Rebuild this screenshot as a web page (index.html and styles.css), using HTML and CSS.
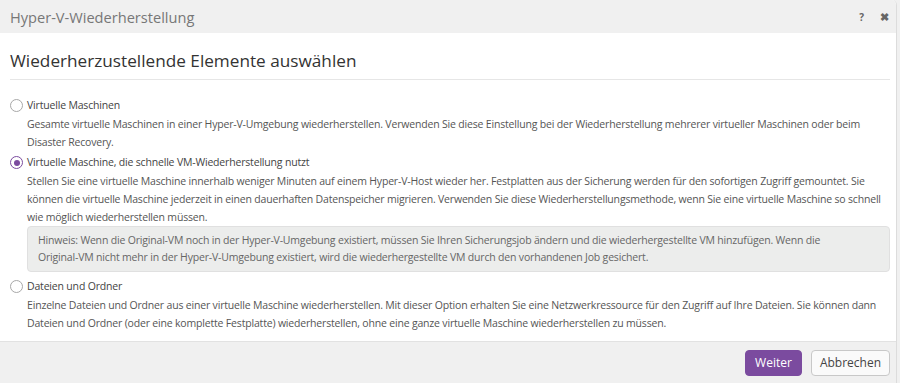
FILE: index.html
```html
<!DOCTYPE html>
<html lang="de">
<head>
    <meta charset="UTF-8">
    <title>Hyper-V-Wiederherstellung</title>
    <link rel="stylesheet" href="styles.css">
</head>
<body>
    <div class="dialog">
        <div class="dialog-header">
            <span class="dialog-title">Hyper-V-Wiederherstellung</span>
            <span class="header-tools">
                <span class="tool">?</span>
                <span class="tool close">&#x2716;</span>
            </span>
        </div>

        <div class="dialog-body">
            <h2>Wiederherzustellende Elemente auswählen</h2>

            <div class="option">
                <span class="radio"></span>
                <div class="option-text">
                    <div class="option-label">Virtuelle Maschinen</div>
                    <p>Gesamte virtuelle Maschinen in einer Hyper-V-Umgebung wiederherstellen. Verwenden Sie diese Einstellung bei der Wiederherstellung mehrerer virtueller Maschinen oder beim Disaster Recovery.</p>
                </div>
            </div>

            <div class="option">
                <span class="radio checked"></span>
                <div class="option-text">
                    <div class="option-label">Virtuelle Maschine, die schnelle VM-Wiederherstellung nutzt</div>
                    <p>Stellen Sie eine virtuelle Maschine innerhalb weniger Minuten auf einem Hyper-V-Host wieder her. Festplatten aus der Sicherung werden für den sofortigen Zugriff gemountet. Sie können die virtuelle Maschine jederzeit in einen dauerhaften Datenspeicher migrieren. Verwenden Sie diese Wiederherstellungsmethode, wenn Sie eine virtuelle Maschine so schnell wie möglich wiederherstellen müssen.</p>
                    <div class="note">Hinweis: Wenn die <span class="nowrap">Original-VM</span> noch in der Hyper-V-Umgebung existiert, müssen Sie Ihren Sicherungsjob ändern und die wiederhergestellte VM hinzufügen. Wenn die <span class="nowrap">Original-VM</span> nicht mehr in der Hyper-V-Umgebung existiert, wird die wiederhergestellte VM durch den vorhandenen Job gesichert.</div>
                </div>
            </div>

            <div class="option">
                <span class="radio"></span>
                <div class="option-text">
                    <div class="option-label">Dateien und Ordner</div>
                    <p>Einzelne Dateien und Ordner aus einer virtuelle Maschine wiederherstellen. Mit dieser Option erhalten Sie eine Netzwerkressource für den Zugriff auf Ihre Dateien. Sie können dann Dateien und Ordner (oder eine komplette Festplatte) wiederherstellen, ohne eine ganze virtuelle Maschine wiederherstellen zu müssen.</p>
                </div>
            </div>
        </div>

        <div class="dialog-footer">
            <button class="btn primary">Weiter</button>
            <button class="btn">Abbrechen</button>
        </div>
    </div>
</body>
</html>
```

FILE: styles.css
```css
html, body {
    margin: 0;
    padding: 0;
    background: #f0f0f0;
}
body {
    font-family: "Open Sans", Arial, sans-serif;
    color: #444;
    width: 900px;
    height: 383px;
    overflow: hidden;
}
.dialog {
    width: 896px;
    height: 383px;
    display: flex;
    flex-direction: column;
    border-right: 1px solid #dcdcdc;
    border-top-right-radius: 5px;
    background: #fff;
    overflow: hidden;
}
.dialog-header {
    height: 33px;
    flex: none;
    display: flex;
    align-items: center;
    justify-content: space-between;
    padding: 0 7px 0 10px;
    background: #f0f0f0;
}
.dialog-title {
    font-size: 14.6px;
    color: #777;
}
.header-tools {
    display: flex;
    align-items: center;
    gap: 16px;
}
.tool {
    font-size: 10px;
    font-weight: bold;
    color: #666;
}
.close {
    font-size: 10.5px;
}
.dialog-body {
    flex: 1;
    padding: 0 6px 0 10px;
}
h2 {
    margin: 16px 0 0;
    padding-bottom: 6px;
    font-size: 17.2px;
    line-height: 24px;
    font-weight: normal;
    color: #333;
    border-bottom: 1px solid #e6e6e6;
}
.option {
    display: flex;
    align-items: flex-start;
    margin-top: 2px;
    font-size: 10.5px;
    letter-spacing: -0.18px;
    line-height: 18px;
}
.option:first-of-type {
    margin-top: 16px;
}
.radio {
    flex: none;
    width: 11px;
    height: 11px;
    margin: 3px 4px 0 0;
    border: 1px solid #a8a8a8;
    border-radius: 50%;
    background: #fff;
    position: relative;
}
.radio.checked {
    border-color: #7b4b9f;
}
.radio.checked::after {
    content: "";
    position: absolute;
    left: 2.5px;
    top: 2.5px;
    width: 6px;
    height: 6px;
    border-radius: 50%;
    background: #7b4b9f;
}
.option-text {
    flex: 1;
}
.option-label {
    margin-bottom: 1px;
}
.option-text p {
    margin: 0;
    color: #555;
}
.note {
    margin: 0 0 3px;
    padding: 5px 20px 5px 10px;
    background: #ecedec;
    border: 1px solid #e0e0e0;
    border-radius: 4px;
    line-height: 17px;
    color: #666;
}
.nowrap {
    white-space: nowrap;
}
.dialog-footer {
    height: 41px;
    flex: none;
    display: flex;
    align-items: center;
    justify-content: flex-end;
    gap: 9px;
    padding: 0 6px;
    background: #f0f0f0;
    border-top: 1px solid #e2e2e2;
}
.btn {
    height: 26px;
    padding: 0 8px;
    font-family: "Open Sans", Arial, sans-serif;
    font-size: 12px;
    color: #444;
    background: #fafafa;
    border: 1px solid #c8c8c8;
    border-radius: 4px;
}
.btn.primary {
    padding: 0 9px;
    background: #7b4b9f;
    border-color: #7b4b9f;
    color: #fff;
}
```
